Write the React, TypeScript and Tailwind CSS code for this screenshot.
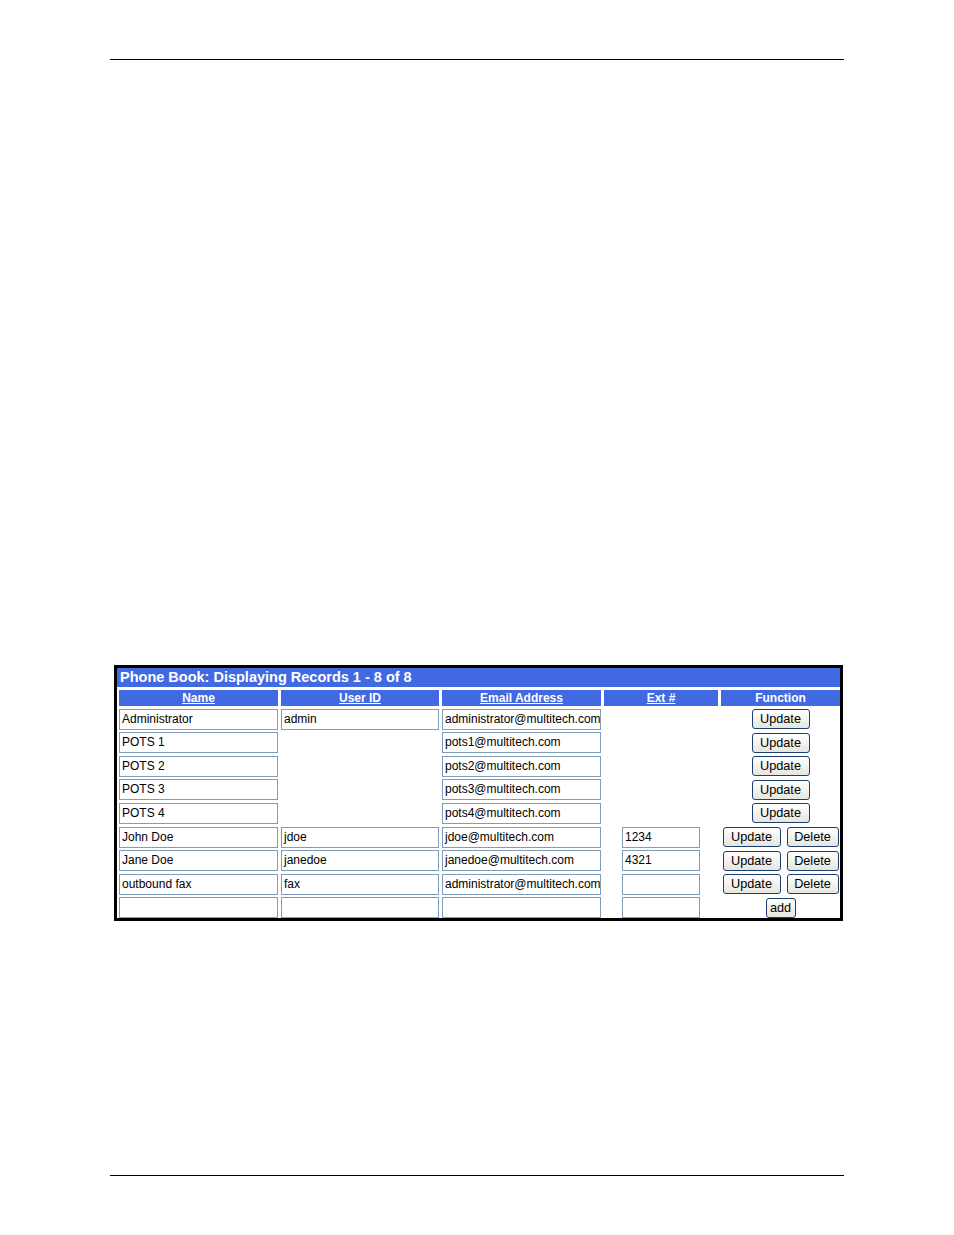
import React from 'react';

interface Entry {
  name: string;
  userId: string | null;
  email: string;
  ext: string | null;
  canDelete: boolean;
}

const entries: Entry[] = [
  { name: 'Administrator', userId: 'admin', email: 'administrator@multitech.com', ext: null, canDelete: false },
  { name: 'POTS 1', userId: null, email: 'pots1@multitech.com', ext: null, canDelete: false },
  { name: 'POTS 2', userId: null, email: 'pots2@multitech.com', ext: null, canDelete: false },
  { name: 'POTS 3', userId: null, email: 'pots3@multitech.com', ext: null, canDelete: false },
  { name: 'POTS 4', userId: null, email: 'pots4@multitech.com', ext: null, canDelete: false },
  { name: 'John Doe', userId: 'jdoe', email: 'jdoe@multitech.com', ext: '1234', canDelete: true },
  { name: 'Jane Doe', userId: 'janedoe', email: 'janedoe@multitech.com', ext: '4321', canDelete: true },
  { name: 'outbound fax', userId: 'fax', email: 'administrator@multitech.com', ext: '', canDelete: true },
];

// text box in the old XP look
const Field = ({ value, className = 'w-full' }: { value: string; className?: string }) => (
  <div
    className={`${className} h-[21px] border border-[#7f9db9] bg-white pl-[2px] text-[12px] leading-[19px] text-black whitespace-nowrap overflow-hidden`}
  >
    {value}
  </div>
);

const Button = ({ label, className }: { label: string; className: string }) => (
  <button
    className={`${className} h-[20px] rounded-[3px] border border-[#1d3f70] bg-gradient-to-b from-white to-[#e6e6de] text-[12.7px] leading-[18px] text-black`}
  >
    {label}
  </button>
);

const HeaderCell = ({ label, link = true }: { label: string; link?: boolean }) => (
  <div className="h-[16px] bg-[#4169e1] text-center text-[12px] font-bold leading-[16px] text-white">
    <span className={link ? 'underline' : ''}>{label}</span>
  </div>
);

export default function App() {
  return (
    <div className="flex h-[1235px] w-[954px] flex-col bg-white px-[110px] pt-[59px] pb-[59px] font-['Liberation_Sans',Arial,sans-serif]">
      <div className="h-px bg-black" />

      <div className="ml-[4px] mt-[605px] w-[729px] border-[3px] border-black">
        <div className="h-[19px] bg-[#4169e1] pl-[3px] text-[14.5px] font-bold leading-[19px] text-white">
          Phone Book: Displaying Records 1 - 8 of 8
        </div>

        <div className="mt-[3px] grid grid-cols-[159px_158px_159px_114px_119px] gap-x-[3px] gap-y-[2.6px] pl-[2px]">
          <HeaderCell label="Name" />
          <HeaderCell label="User ID" />
          <HeaderCell label="Email Address" />
          <HeaderCell label="Ext #" />
          <HeaderCell label="Function" link={false} />

          {entries.map((e) => (
            <React.Fragment key={e.name}>
              <Field value={e.name} />
              {e.userId !== null ? <Field value={e.userId} /> : <div />}
              <Field value={e.email} />
              <div className="flex justify-center">
                {e.ext !== null && <Field value={e.ext} className="w-[78px]" />}
              </div>
              <div className="flex items-center justify-center gap-[6px]">
                <Button label="Update" className="w-[58px]" />
                {e.canDelete && <Button label="Delete" className="w-[52px]" />}
              </div>
            </React.Fragment>
          ))}

          <Field value="" />
          <Field value="" />
          <Field value="" />
          <div className="flex justify-center">
            <Field value="" className="w-[78px]" />
          </div>
          <div className="flex items-center justify-center">
            <Button label="add" className="w-[30px]" />
          </div>
        </div>
      </div>

      <div className="mt-auto h-px bg-black" />
    </div>
  );
}
